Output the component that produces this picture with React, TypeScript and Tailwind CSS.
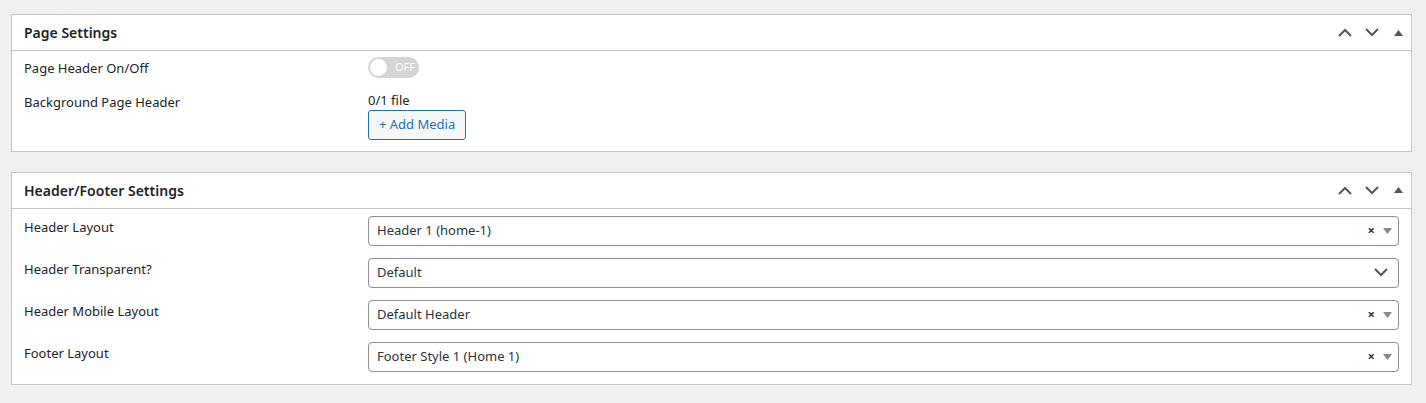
import React from 'react';

const font = { fontFamily: '"Noto Sans", "Open Sans", sans-serif' };

function PanelHeader({ title }: { title: string }) {
  return (
    <div className="h-[36px] flex items-center justify-between pl-3 pr-0 border-b border-[#c3c4c7]">
      <h2 className="text-[14px] font-semibold text-[#1d2327]">{title}</h2>
      <div className="flex items-center text-[#50575e]">
        <span className="w-[27px] h-[36px] flex items-center justify-center">
          <svg width="14" height="9" viewBox="0 0 14 9" fill="none" stroke="currentColor" strokeWidth="2">
            <path d="M1 8 L7 2 L13 8" />
          </svg>
        </span>
        <span className="w-[27px] h-[36px] flex items-center justify-center">
          <svg width="14" height="9" viewBox="0 0 14 9" fill="none" stroke="currentColor" strokeWidth="2">
            <path d="M1 1 L7 7 L13 1" />
          </svg>
        </span>
        <span className="w-[26px] h-[36px] flex items-center justify-center">
          <svg width="9" height="6" viewBox="0 0 9 6" fill="currentColor">
            <path d="M0 6 L4.5 0 L9 6 Z" />
          </svg>
        </span>
      </div>
    </div>
  );
}

function Select2({ value }: { value: string }) {
  return (
    <div className="w-full h-[30px] flex items-center justify-between border border-[#8c8f94] rounded-[4px] bg-white pl-2 pr-[6px]">
      <span className="text-[13px] text-[#2c3338]">{value}</span>
      <div className="flex items-center gap-[8px]">
        <span className="text-[13px] font-bold text-[#2c3338] leading-none">×</span>
        <svg width="9" height="6" viewBox="0 0 9 6" fill="#888">
          <path d="M0 0 L9 0 L4.5 6 Z" />
        </svg>
      </div>
    </div>
  );
}

function NativeSelect({ value }: { value: string }) {
  return (
    <div className="w-full h-[30px] flex items-center justify-between border border-[#8c8f94] rounded-[4px] bg-white pl-2 pr-[10px]">
      <span className="text-[13px] text-[#2c3338]">{value}</span>
      <svg width="14" height="9" viewBox="0 0 14 9" fill="none" stroke="#50575e" strokeWidth="2">
        <path d="M1 1 L7 7 L13 1" />
      </svg>
    </div>
  );
}

export default function App() {
  const rows = [
    { label: 'Header Layout', value: 'Header 1 (home-1)', kind: 's2' },
    { label: 'Header Transparent?', value: 'Default', kind: 'native' },
    { label: 'Header Mobile Layout', value: 'Default Header', kind: 's2' },
    { label: 'Footer Layout', value: 'Footer Style 1 (Home 1)', kind: 's2' },
  ];

  return (
    <div className="min-h-screen bg-[#f0f0f1] pt-[14px] pl-[11px] pr-[14px] pb-4 text-[#1d2327]" style={font}>
      {/* PAGE SETTINGS */}
      <div className="bg-white border border-[#c3c4c7]">
        <PanelHeader title="Page Settings" />
        <div className="pl-3 pr-3 pt-[6px] pb-[11px]">
          <div className="flex items-start">
            <div className="w-[344px] text-[13px] pt-[2px]">Page Header On/Off</div>
            <div className="w-[51px] h-[21px] rounded-full bg-[#d4d4d4] flex items-center pl-[2px]">
              <span className="w-[17px] h-[17px] rounded-full bg-white"></span>
              <span className="ml-[8px] text-[11px] text-white">OFF</span>
            </div>
          </div>
          <div className="flex items-start mt-[12px]">
            <div className="w-[344px] text-[13px] pt-[2px]">Background Page Header</div>
            <div className="flex flex-col">
              <span className="text-[13px] leading-[18px]">0/1 file</span>
              <button className="mt-[1px] h-[30px] px-[10px] border border-[#2271b1] rounded-[3px] bg-[#f6f7f7] text-[13px] text-[#2271b1]">
                + Add Media
              </button>
            </div>
          </div>
        </div>
      </div>

      {/* HEADER/FOOTER SETTINGS */}
      <div className="mt-[20px] bg-white border border-[#c3c4c7]">
        <PanelHeader title="Header/Footer Settings" />
        <div className="pl-3 pr-3 pt-[7px] pb-[12px] flex flex-col gap-[12px]">
          {rows.map((r) => (
            <div key={r.label} className="flex items-start">
              <div className="w-[344px] shrink-0 text-[13px] pt-[2px]">{r.label}</div>
              <div className="flex-1">
                {r.kind === 's2' ? <Select2 value={r.value} /> : <NativeSelect value={r.value} />}
              </div>
            </div>
          ))}
        </div>
      </div>
    </div>
  );
}
